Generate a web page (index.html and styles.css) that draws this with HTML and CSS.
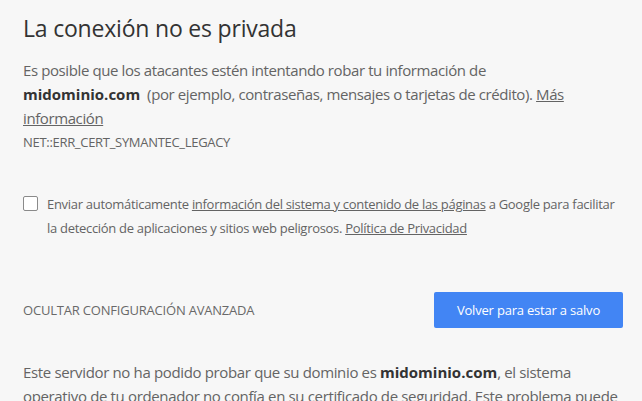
FILE: index.html
```html
<!DOCTYPE html>
<html lang="es">
<head>
    <meta charset="UTF-8">
    <meta name="viewport" content="width=device-width, initial-scale=1.0">
    <title>Error de privacidad</title>
    <link rel="stylesheet" href="styles.css">
</head>
<body>
    <div class="interstitial">
        <h1 class="heading">La conexión no es privada</h1>

        <p class="main-message">
            Es posible que los atacantes estén intentando robar tu información de
            <strong>midominio.com</strong>&nbsp; (por ejemplo, contraseñas, mensajes o tarjetas de crédito).
            <a href="#">Más información</a>
        </p>
        <div class="error-code">NET::ERR_CERT_SYMANTEC_LEGACY</div>

        <!-- Extended reporting opt-in -->
        <label class="opt-in">
            <span class="checkbox"></span>
            <span class="opt-in-text">
                Enviar automáticamente <a href="#">información del sistema y contenido de las páginas</a>
                a Google para facilitar la detección de aplicaciones y sitios web peligrosos.
                <a href="#">Política de Privacidad</a>
            </span>
        </label>

        <div class="nav-wrapper">
            <button class="details-button">Ocultar configuración avanzada</button>
            <button class="primary-button">Volver para estar a salvo</button>
        </div>

        <p class="details">
            Este servidor no ha podido probar que su dominio es <strong>midominio.com</strong>, el sistema
            operativo de tu ordenador no confía en su certificado de seguridad. Este problema puede
            deberse a una configuración incorrecta o a que un atacante haya interceptado la conexión.
        </p>
    </div>
</body>
</html>
```

FILE: styles.css
```css
body {
    font-family: 'Open Sans', 'Noto Sans', sans-serif;
    background-color: #f7f7f7;
    color: #646464;
    margin: 0;
    padding: 0 19px 0 23px;
    box-sizing: border-box;
    overflow: hidden;
}

.interstitial {
    width: 100%;
    max-width: 600px;
}

.heading {
    font-size: 23px;
    font-weight: 400;
    color: #333;
    margin: 12px 0 0;
    line-height: 32px;
    letter-spacing: -0.2px;
}

.main-message {
    max-width: 565px;
    font-size: 15px;
    line-height: 24px;
    margin: 14px 0 0;
    letter-spacing: -0.4px;
}

strong {
    color: #333;
    font-weight: 700;
    letter-spacing: 0;
}

a {
    color: #646464;
    text-decoration: underline;
}

.error-code {
    font-size: 13px;
    line-height: 24px;
    color: #646464;
    letter-spacing: -0.3px;
}

.opt-in {
    display: flex;
    gap: 9px;
    margin-top: 38px;
    font-size: 13px;
    line-height: 24px;
    letter-spacing: -0.3px;
}

.checkbox {
    flex: none;
    width: 13px;
    height: 13px;
    margin-top: 4px;
    border: 1px solid #8a8a8a;
    border-radius: 2px;
    background-color: #fff;
}

.nav-wrapper {
    display: flex;
    justify-content: space-between;
    align-items: center;
    margin-top: 52px;
}

.details-button {
    font-family: inherit;
    font-size: 13px;
    text-transform: uppercase;
    color: #696969;
    background: none;
    border: none;
    padding: 0;
    letter-spacing: -0.2px;
}

.primary-button {
    font-family: inherit;
    font-size: 13px;
    color: #fff;
    background-color: #4285f4;
    border: none;
    border-radius: 2px;
    width: 189px;
    height: 36px;
    padding: 0;
    letter-spacing: -0.2px;
}

.details {
    font-size: 15px;
    line-height: 24px;
    margin: 32px 0 0;
    letter-spacing: -0.35px;
}
```
